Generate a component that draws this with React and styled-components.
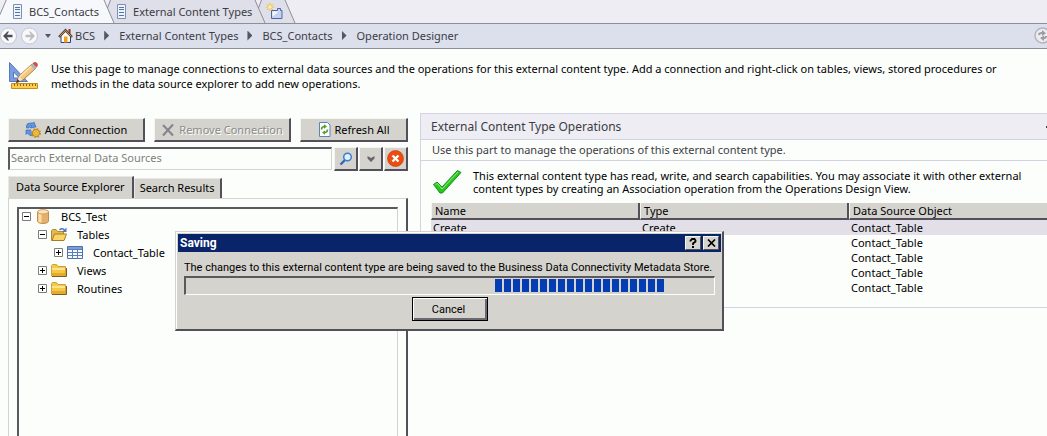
import React, { useState } from 'react';
import styled, { createGlobalStyle, css } from 'styled-components';

const GlobalStyle = createGlobalStyle`
	* {
		box-sizing: border-box;
	}

	html,
	body {
		margin: 0;
		height: 100%;
		overflow: hidden;
	}

	#root {
		height: 100%;
	}

	body,
	button,
	input,
	table {
		font-family: 'Noto Sans', Tahoma, sans-serif;
		font-size: 11px;
		line-height: 15px;
		color: #000;
	}

	svg {
		display: block;
		flex: none;
	}
`;

const raised = css`
	border: solid;
	border-width: 1px 2px 2px 1px;
	border-color: #f4f4f0 #54505a #54505a #f4f4f0;
	background: #d4d3ce;
`;

const Page = styled.div`
	position: relative;
	display: flex;
	flex-direction: column;
	height: 100%;
	background: #fcfefc;
	overflow: hidden;
`;

/* document tabs */

const TabBar = styled.nav`
	display: flex;
	flex: none;
	height: 24px;
	background: #ededf3;
	border-bottom: 1px solid #8c8e98;
`;

const DocTab = styled.button`
	display: flex;
	align-items: center;
	gap: 6px;
	height: 23px;
	padding: 0 ${p => p.$end || 0}px 1px ${p => p.$start || 0}px;
	border: 0;
	color: #3c3c44;
	background: ${p => (p.$active ? '#f7f8fc' : '#dedfe9')};
`;

/* breadcrumb */

const Crumbs = styled.nav`
	display: flex;
	flex: none;
	align-items: center;
	height: 25px;
	padding-bottom: 1px;
	background: #dce0ed;
	border-bottom: 1px solid #8c8e98;
`;

const NavButton = styled.button`
	display: flex;
	padding: 0;
	margin-right: ${p => p.$gap || 0}px;
	border: 0;
	background: none;
`;

const Crumb = styled.a`
	color: #3c3c44;
	text-decoration: none;
`;

const Arrow = styled.span`
	width: 5px;
	height: 10px;
	margin: 0 10px 0 9px;
	background: #55565e;
	clip-path: polygon(0 0, 100% 50%, 0 100%);
`;

const ReloadButton = styled(NavButton)`
	margin: 0 -4px 0 auto;
`;

const Intro = styled.header`
	display: flex;
	flex: none;
	align-items: center;
	gap: 12px;
	padding: 12px 24px 22px 8px;
`;

const IntroText = styled.p`
	margin: 0;
`;

const Columns = styled.main`
	display: flex;
	flex: 1;
	gap: 12px;
	min-height: 0;
	padding-left: 8px;
`;

/* data source explorer */

const Explorer = styled.section`
	display: flex;
	flex: none;
	flex-direction: column;
	width: 400px;
	padding-top: 5px;
`;

const Toolbar = styled.div`
	display: grid;
	grid-template-columns: 137px 137px 1fr;
	gap: 9px;
	margin-bottom: 5px;
`;

const ToolButton = styled.button`
	${raised}
	display: flex;
	align-items: center;
	justify-content: center;
	gap: 4px;
	height: 24px;
	padding: 0;

	&:disabled {
		color: #8c8c88;
		text-shadow: 1px 1px 0 #fff;
	}
`;

const SearchRow = styled.form`
	display: flex;
	gap: 1px;
	margin-bottom: 5px;
`;

const SearchInput = styled.input`
	flex: 1;
	min-width: 0;
	height: 23px;
	margin-right: 1px;
	padding: 0 1px 4px;
	border: solid;
	border-width: 2px 1px 1px 2px;
	border-color: #5c5860 #d4d3ce #d4d3ce #5c5860;
	background: #fcfefc;

	&::placeholder {
		color: #80807c;
		opacity: 1;
	}
`;

const IconButton = styled.button`
	${raised}
	display: flex;
	align-items: center;
	justify-content: center;
	width: 24px;
	height: 24px;
	padding: 0;
`;

const PaneTabs = styled.div`
	display: flex;
	align-items: flex-end;
	height: 22px;
`;

const PaneTab = styled.button`
	height: ${p => (p.$active ? 22 : 20)}px;
	padding: 0 ${p => (p.$active ? 7 : 5)}px 2px;
	border: solid;
	border-width: 1px 2px 0 1px;
	border-color: #e8e8e4 #54505a #54505a #e8e8e4;
	background: #d4d3ce;
`;

const Pane = styled.div`
	display: flex;
	flex: 1;
	padding: 8px 8px 0;
	border: solid;
	border-width: 1px 2px 0 1px;
	border-color: #d4d3ce #54505a #54505a #d4d3ce;
`;

const Tree = styled.ul`
	display: flex;
	flex: 1;
	flex-direction: column;
	gap: 3px;
	margin: 0;
	padding: 0 0 0 3px;
	list-style: none;
	border: solid;
	border-width: 2px 1px 0 2px;
	border-color: #5c5860 #d4d3ce #d4d3ce #5c5860;
`;

const TreeRow = styled.li`
	display: flex;
	align-items: center;
	height: 15px;
	padding-left: ${p => p.$level * 16}px;
`;

const Toggle = styled.button`
	display: flex;
	padding: 0;
	margin-right: 4px;
	border: 0;
	background: none;
`;

const TreeLabel = styled.span`
	margin-left: 10px;
`;

/* operations */

const Operations = styled.section`
	flex: 1;
	min-width: 0;
	align-self: flex-start;
	padding-bottom: 12px;
	border: solid #d2d2e2;
	border-width: 1px 0 1px 1px;
`;

const OperationsHead = styled.div`
	display: flex;
	align-items: center;
	justify-content: space-between;
	height: 26px;
	padding-left: 10px;
	background: #ededf3;
	border-bottom: 1px solid #d2d2e2;
`;

const Title = styled.h2`
	margin: 0;
	font-size: 12px;
	font-weight: 400;
	color: #3c3c44;
`;

const Collapse = styled.button`
	width: 8px;
	height: 2px;
	margin-right: -7px;
	padding: 0;
	border: 0;
	background: #3c3c44;
`;

const Hint = styled.p`
	margin: 0;
	padding: 2px 11px 3px;
	color: #3c3c44;
	border-bottom: 1px solid #d2d2e2;
`;

const Status = styled.div`
	display: flex;
	align-items: center;
	gap: 10px;
	padding: 8px 24px 8px 11px;
	line-height: 13px;
`;

const Table = styled.table`
	width: calc(100% - 10px);
	margin-left: 10px;
	table-layout: fixed;
	border-collapse: separate;
	border-spacing: 0;

	th {
		height: 17px;
		padding: 0 3px;
		font-weight: 400;
		text-align: left;
		background: #d4d3ce;
		border-bottom: 2px solid #54505a;
		border-right: 2px solid #54505a;
		border-left: 1px solid #f4f4f0;
	}

	th:last-child {
		border-right: 0;
	}

	td {
		height: 15px;
		padding: 0 2px;
		line-height: 15px;
	}

	tbody tr:first-child td {
		background: #e2dfe8;
	}
`;

/* saving dialog */

const Dialog = styled.div`
	position: absolute;
	top: 231px;
	left: 175px;
	width: 549px;
	padding: 1px;
	font-family: Roboto, Tahoma, sans-serif;
	border: solid;
	border-width: 1px 2px 2px 1px;
	border-color: #d4d3ce #54505a #54505a #d4d3ce;
	background: #d4d3ce;
	box-shadow: inset 1px 1px 0 #fcfefc;
`;

const TitleBar = styled.div`
	display: flex;
	align-items: center;
	gap: 2px;
	height: 18px;
	margin: 1px 0 0 1px;
	padding: 0 2px;
	color: #fff;
	font-size: 12px;
	font-weight: 700;
	background: #0a246a;
`;

const DialogTitle = styled.span`
	flex: 1;
`;

const CaptionButton = styled(IconButton)`
	width: 16px;
	height: 14px;
	border-width: 1px;
`;

const DialogBody = styled.div`
	display: flex;
	flex-direction: column;
	align-items: center;
	gap: 1px;
	padding: 8px 6px 7px 7px;
`;

const Message = styled.p`
	align-self: stretch;
	margin: 0;
	white-space: nowrap;
`;

const Meter = styled.div`
	display: grid;
	grid-template-columns: repeat(58, 7px);
	gap: 2px;
	width: 100%;
	height: 19px;
	padding: 1px 2px 2px 3px;
	border: solid;
	border-width: 2px 1px 1px 2px;
	border-color: #5c5860 #fcfefc #fcfefc #5c5860;
`;

const Block = styled.span`
	background: ${p => (p.$on ? '#043cb4' : 'transparent')};
`;

const CancelButton = styled.button`
	width: 76px;
	height: 24px;
	margin-top: 1px;
	padding: 0 2px 0 0;
	font-family: inherit;
	border: 1px solid #000;
	background: #d4d3ce;
	box-shadow: inset 1px 1px 0 #fff, inset -2px -2px 0 #6c6870;
`;

/* icons */

const TabStart = () =>
	<svg width="12" height="23" viewBox="0 0 12 23">
		<path d="M0 15L6.500 0H12v23H0z" fill="#f7f8fc" />
		<path d="M-.5 15.500L6.500-.5" stroke="#8c8e98" />
	</svg>;

const TabEdge = ({ left, right }) =>
	<svg width="12" height="23" viewBox="0 0 12 23">
		<path d="M0 0h1l10 23H0z" fill={left} />
		{right && <path d="M7.500 0H12v23h-1L4.500 8z" fill={right} />}
		<path d="M1 0l10 23" stroke="#8c8e98" />
		{right && <path d="M7.500 0L4.500 8" stroke="#8c8e98" />}
	</svg>;

const SheetIcon = () =>
	<svg width="10" height="15" viewBox="0 0 10 15">
		<path d="M.5.5h8v14h-8z" fill="#eef4fc" stroke="#7c90b4" />
		<path d="M2 3.500h5M2 5.500h5M2 8.500h5M2 11.500h5" stroke="#5474a4" />
	</svg>;

const NewTabIcon = () =>
	<svg width="18" height="17" viewBox="0 0 18 17">
		<path d="M5.500 7.500h6v-2h3v2h1.500v8H5.500z" fill="#c4d4f0" stroke="#4c68a0" />
		<path d="M6.500 8.500h6l-6 5z" fill="#f8faff" />
		<path d="M4 0v8M0 4h8M1.200 1.200l5.600 5.600M6.800 1.200L1.200 6.800" stroke="#f4bc2c" />
		<circle cx="4" cy="4" r="1.800" fill="#fff0a0" />
	</svg>;

const RoundArrow = ({ flip, color }) =>
	<svg width="18" height="18" viewBox="0 0 18 18">
		<circle cx="8.500" cy="9" r="8" fill="#f8f8fa" stroke="#c4c6d0" />
		<path
			d="M3 9l4.500-4.500H9L7 7.800h5.500v2.400H7L9 13.500H7.500z"
			fill={color}
			transform={flip ? 'matrix(-1 0 0 1 17 0)' : undefined}
		/>
	</svg>;

const CaretIcon = () =>
	<svg width="6" height="4" viewBox="0 0 6 4">
		<path d="M0 0h6L3 4z" fill="#55565e" />
	</svg>;

const HomeIcon = () =>
	<svg width="15" height="16" viewBox="0 0 15 16">
		<path d="M10.500 1h2v5h-2z" fill="#a03020" />
		<path d="M3 7.500v7h9.500v-7L7.500 3z" fill="#fdfaf0" stroke="#34406c" />
		<path d="M6 8.500h3.500v6H6z" fill="#f0a020" />
		<path d="M1 9l6.500-6.800L14 9" fill="none" stroke="#4c3c34" strokeWidth="2.400" />
		<path d="M1.500 8.500l6-6.200 6 6.200" fill="none" stroke="#d09c5c" strokeWidth="1" />
	</svg>;

const ReloadIcon = () =>
	<svg width="17" height="17" viewBox="0 0 17 17">
		<circle cx="8.500" cy="8.500" r="7.500" fill="#ececf0" stroke="#b4b4bc" strokeWidth="1.500" />
		<path d="M4 8q0-3 4-3V3l4 3.200L8 9V7Q6 7 6 8zM13 9q0 3-3 3v2l-4-3 4-2.500V10q1 0 1-1z" fill="#9c9ca4" />
	</svg>;

const DesignIcon = () =>
	<svg width="31" height="30" viewBox="0 0 31 30">
		<path d="M1.500 1.500v19h18z" fill="#7c9ce0" stroke="#5478c4" />
		<path d="M5.500 11v6h6z" fill="#fcfefc" stroke="#5478c4" />
		<path d="M3.500 22.500h26v5h-26z" fill="#fccc4c" stroke="#c88c1c" />
		<path d="M6.500 23v2M9.500 23v2M12.500 23v2M15.500 23v2M18.500 23v2M21.500 23v2M24.500 23v2M27.500 23v2" stroke="#946414" />
		<path d="M8.500 21.500l2-6L24 3l4 4-13 12z" fill="#f4c87c" stroke="#a87840" />
		<path d="M12 15.500L24.500 4" stroke="#fce8b4" strokeWidth="1.500" />
		<path d="M9 21l2-5.500 3.500 3.500z" fill="#f4e4d0" />
		<path d="M8 22l1.500-4 2.500 2.500z" fill="#403838" />
		<path d="M22.500 4.500l2-2 4 4-2 2z" fill="#a8b4bc" />
		<path d="M24.500 2.500Q27 0 29 2t-.5 4.500z" fill="#d05048" />
	</svg>;

const ConnectionIcon = () =>
	<svg width="16" height="16" viewBox="0 0 16 16">
		<path d="M1.500 6V4q0-3 4-3H8l1-1 2 5-6 1 2-2H5.500Q4 4 4 6z" fill="#5c98e8" stroke="#2c5cb0" strokeWidth=".6" />
		<path d="M1 8h5L5 9.500q1 1.500 3 1.500v3q-4 0-5.500-3L1 12.500z" fill="#5c98e8" stroke="#2c5cb0" strokeWidth=".6" />
		<circle cx="11" cy="11" r="3.500" fill="#fccc3c" stroke="#b87c14" />
		<circle cx="11" cy="11" r="4.300" fill="none" stroke="#c88c1c" strokeWidth="1.400" strokeDasharray="1.700 1.700" />
		<circle cx="11" cy="11" r="1.300" fill="#fff4c8" stroke="#a86c14" strokeWidth=".6" />
	</svg>;

const RemoveIcon = () =>
	<svg width="14" height="14" viewBox="0 0 14 14">
		<path d="M2 2l10 10.500M12 1.500L2 12.500" fill="none" stroke="#84848a" strokeWidth="2" />
	</svg>;

const RefreshIcon = () =>
	<svg width="13" height="15" viewBox="0 0 13 15">
		<path d="M1.500.5h8l2.500 2.500v11.500H1.500z" fill="#fafcff" stroke="#5c84b8" />
		<path d="M3.500 7.500q0-3 3-3M9.500 7.500q0 3-3 3" fill="none" stroke="#5c9c1c" strokeWidth="1.500" />
		<path d="M6 2.200l3 2.200-3 2.300zM7 8.500v4.300l-3-2.200z" fill="#5c9c1c" />
	</svg>;

const SearchIcon = () =>
	<svg width="14" height="14" viewBox="0 0 14 14">
		<path d="M6 8l-4.500 4.500" stroke="#3468b4" strokeWidth="2.400" />
		<circle cx="8.500" cy="5" r="3.800" fill="#e0f0fc" stroke="#3c7cd0" strokeWidth="1.500" />
	</svg>;

const ChevronIcon = () =>
	<svg width="8" height="6" viewBox="0 0 8 6">
		<path d="M.5 0L4 2 7.500 0v2.500L4 6 .5 2.500z" fill="#68686c" />
	</svg>;

const ClearIcon = () =>
	<svg width="17" height="17" viewBox="0 0 17 17">
		<circle cx="8.500" cy="8.500" r="8" fill="#ec4c10" stroke="#c83808" strokeWidth=".6" />
		<path d="M5.500 5.500l6 6M11.500 5.500l-6 6" stroke="#fff" strokeWidth="2.400" />
	</svg>;

const ToggleIcon = ({ open }) =>
	<svg width="9" height="9" viewBox="0 0 9 9">
		<path d="M.5.5h8v8h-8z" fill="#fff" stroke="#7c7c7c" />
		<path d={open ? 'M2 4.500h5' : 'M2 4.500h5M4.500 2v5'} stroke="#000" />
	</svg>;

const DatabaseIcon = () =>
	<svg width="16" height="15" viewBox="0 0 16 15">
		<path d="M2.500 2.500v10q1 2 5.500 2t5.500-2v-10z" fill="#e4b06c" stroke="#c0904c" />
		<path d="M3.500 4v9l3 .8V5z" fill="#fce0a8" />
		<ellipse cx="8" cy="2.800" rx="5.500" ry="2.200" fill="#fce4b8" stroke="#d0a060" />
	</svg>;

const FolderIcon = () =>
	<svg width="16" height="13" viewBox="0 0 16 13">
		<path d="M.5 12V1.500l1-1h4l1.500 2h7.500v9.500z" fill="#f4c848" stroke="#d0a040" />
		<path d="M1 4h13v2H1z" fill="#fce488" />
		<path d="M1 9h13v3H1z" fill="#e4ac2c" />
		<path d="M1 12.500h14.500V4" fill="none" stroke="#7c6020" />
	</svg>;

const OpenFolderIcon = () =>
	<svg width="16" height="15" viewBox="0 0 16 15">
		<path d="M.5 13.500V3.500l1-1h3.500l1.500 2h6v9z" fill="#e8b848" stroke="#b08c34" />
		<path d="M1 13.500L3.500 7h12L13 13.500z" fill="#fcd468" stroke="#a87c24" />
		<path d="M8.500 3q2-2.500 5 0" fill="none" stroke="#5478b4" strokeWidth="1.300" />
		<path d="M15.500.5v4.500H11z" fill="#5478b4" />
	</svg>;

const TableIcon = () =>
	<svg width="16" height="13" viewBox="0 0 16 13">
		<path d="M.5.5h15v12H.5z" fill="#f4f8ff" stroke="#4c70b0" />
		<path d="M1 1h14v2H1z" fill="#7c9cdc" />
		<path d="M1 3.500h14M1 6.500h14M1 9.500h14M5.500 3v10M10.500 3v10" stroke="#5c7cb8" />
	</svg>;

const CheckIcon = () =>
	<svg width="31" height="26" viewBox="0 0 31 26">
		<path d="M1.500 15.500l3.500-2.500 5 5L25.500 1.500l3.500 2L10.500 24H8z" fill="#2cc424" stroke="#149414" />
		<path d="M3.500 15.500l2-1 4.500 5.500L26 3" fill="none" stroke="#8cf07c" />
	</svg>;

const HelpIcon = () =>
	<svg width="8" height="10" viewBox="0 0 8 10">
		<path d="M1.500 3.500V2.500L3 1h2.500L6.500 2.500v1L4 5.500V7M3 9h2" fill="none" stroke="#000" strokeWidth="1.800" />
	</svg>;

const CloseIcon = () =>
	<svg width="9" height="8" viewBox="0 0 9 8">
		<path d="M1 .5l7 7M8 .5l-7 7" stroke="#000" strokeWidth="1.700" />
	</svg>;

const crumbs = ['BCS', 'External Content Types', 'BCS_Contacts', 'Operation Designer'];

const nodes = [
	{ label: 'BCS_Test', level: 0, open: true, icon: <DatabaseIcon /> },
	{ label: 'Tables', level: 1, open: true, icon: <OpenFolderIcon /> },
	{ label: 'Contact_Table', level: 2, icon: <TableIcon /> },
	{ label: 'Views', level: 1, icon: <FolderIcon /> },
	{ label: 'Routines', level: 1, icon: <FolderIcon /> },
];

const operations = ['Create', '', '', '', ''];

const App = () => {
	const [query, setQuery] = useState('');

	return (
		<Page>
			<GlobalStyle />
			<TabBar>
				<TabStart />
				<DocTab $active $start={1} $end={4}>
					<SheetIcon />
					BCS_Contacts
				</DocTab>
				<TabEdge left="#f7f8fc" right="#dedfe9" />
				<DocTab $start={2} $end={2}>
					<SheetIcon />
					External Content Types
				</DocTab>
				<TabEdge left="#dedfe9" right="#dedfe9" />
				<DocTab aria-label="New tab">
					<NewTabIcon />
				</DocTab>
				<TabEdge left="#dedfe9" />
			</TabBar>
			<Crumbs>
				<NavButton aria-label="Back" $gap={3}>
					<RoundArrow color="#4c4c54" />
				</NavButton>
				<NavButton aria-label="Forward" $gap={6}>
					<RoundArrow flip color="#bcbcc4" />
				</NavButton>
				<NavButton aria-label="History" $gap={7}>
					<CaretIcon />
				</NavButton>
				<NavButton aria-label="Home" $gap={2}>
					<HomeIcon />
				</NavButton>
				{crumbs.map((crumb, index) =>
					<React.Fragment key={crumb}>
						{index > 0 && <Arrow />}
						<Crumb href="#">{crumb}</Crumb>
					</React.Fragment>,
				)}
				<ReloadButton aria-label="Reload">
					<ReloadIcon />
				</ReloadButton>
			</Crumbs>
			<Intro>
				<DesignIcon />
				<IntroText>
					Use this page to manage connections to external data sources and the operations for
					this external content type. Add a connection and right-click on tables, views, stored
					procedures or methods in the data source explorer to add new operations.
				</IntroText>
			</Intro>
			<Columns>
				<Explorer>
					<Toolbar>
						<ToolButton>
							<ConnectionIcon />
							Add Connection
						</ToolButton>
						<ToolButton disabled>
							<RemoveIcon />
							Remove Connection
						</ToolButton>
						<ToolButton>
							<RefreshIcon />
							Refresh All
						</ToolButton>
					</Toolbar>
					<SearchRow onSubmit={e => e.preventDefault()}>
						<SearchInput
							aria-label="Search External Data Sources"
							placeholder="Search External Data Sources"
							value={query}
							onChange={e => setQuery(e.target.value)}
						/>
						<IconButton aria-label="Search">
							<SearchIcon />
						</IconButton>
						<IconButton type="button" aria-label="Search options">
							<ChevronIcon />
						</IconButton>
						<IconButton type="button" aria-label="Clear" onClick={() => setQuery('')}>
							<ClearIcon />
						</IconButton>
					</SearchRow>
					<PaneTabs>
						<PaneTab $active>Data Source Explorer</PaneTab>
						<PaneTab>Search Results</PaneTab>
					</PaneTabs>
					<Pane>
						<Tree>
							{nodes.map(({ label, level, open, icon }) =>
								<TreeRow key={label} $level={level}>
									<Toggle aria-label={`Toggle ${label}`}>
										<ToggleIcon open={open} />
									</Toggle>
									{icon}
									<TreeLabel>{label}</TreeLabel>
								</TreeRow>,
							)}
						</Tree>
					</Pane>
				</Explorer>
				<Operations>
					<OperationsHead>
						<Title>External Content Type Operations</Title>
						<Collapse aria-label="Collapse" />
					</OperationsHead>
					<Hint>Use this part to manage the operations of this external content type.</Hint>
					<Status>
						<CheckIcon />
						<span>
							This external content type has read, write, and search capabilities. You may
							associate it with other external content types by creating an Association
							operation from the Operations Design View.
						</span>
					</Status>
					<Table>
						<colgroup>
							<col width="209" />
							<col width="209" />
							<col />
						</colgroup>
						<thead>
							<tr>
								<th>Name</th>
								<th>Type</th>
								<th>Data Source Object</th>
							</tr>
						</thead>
						<tbody>
							{operations.map((name, index) =>
								<tr key={index}>
									<td>{name}</td>
									<td>{name}</td>
									<td>Contact_Table</td>
								</tr>,
							)}
						</tbody>
					</Table>
				</Operations>
			</Columns>
			<Dialog role="dialog" aria-label="Saving">
				<TitleBar>
					<DialogTitle>Saving</DialogTitle>
					<CaptionButton aria-label="Help">
						<HelpIcon />
					</CaptionButton>
					<CaptionButton aria-label="Close">
						<CloseIcon />
					</CaptionButton>
				</TitleBar>
				<DialogBody>
					<Message id="saving-message">
						The changes to this external content type are being saved to the Business Data
						Connectivity Metadata Store.
					</Message>
					<Meter role="progressbar" aria-labelledby="saving-message">
						{Array.from({ length: 58 }, (_, index) =>
							<Block key={index} $on={index >= 34 && index < 53} />,
						)}
					</Meter>
					<CancelButton>Cancel</CancelButton>
				</DialogBody>
			</Dialog>
		</Page>
	);
};

export default App;
